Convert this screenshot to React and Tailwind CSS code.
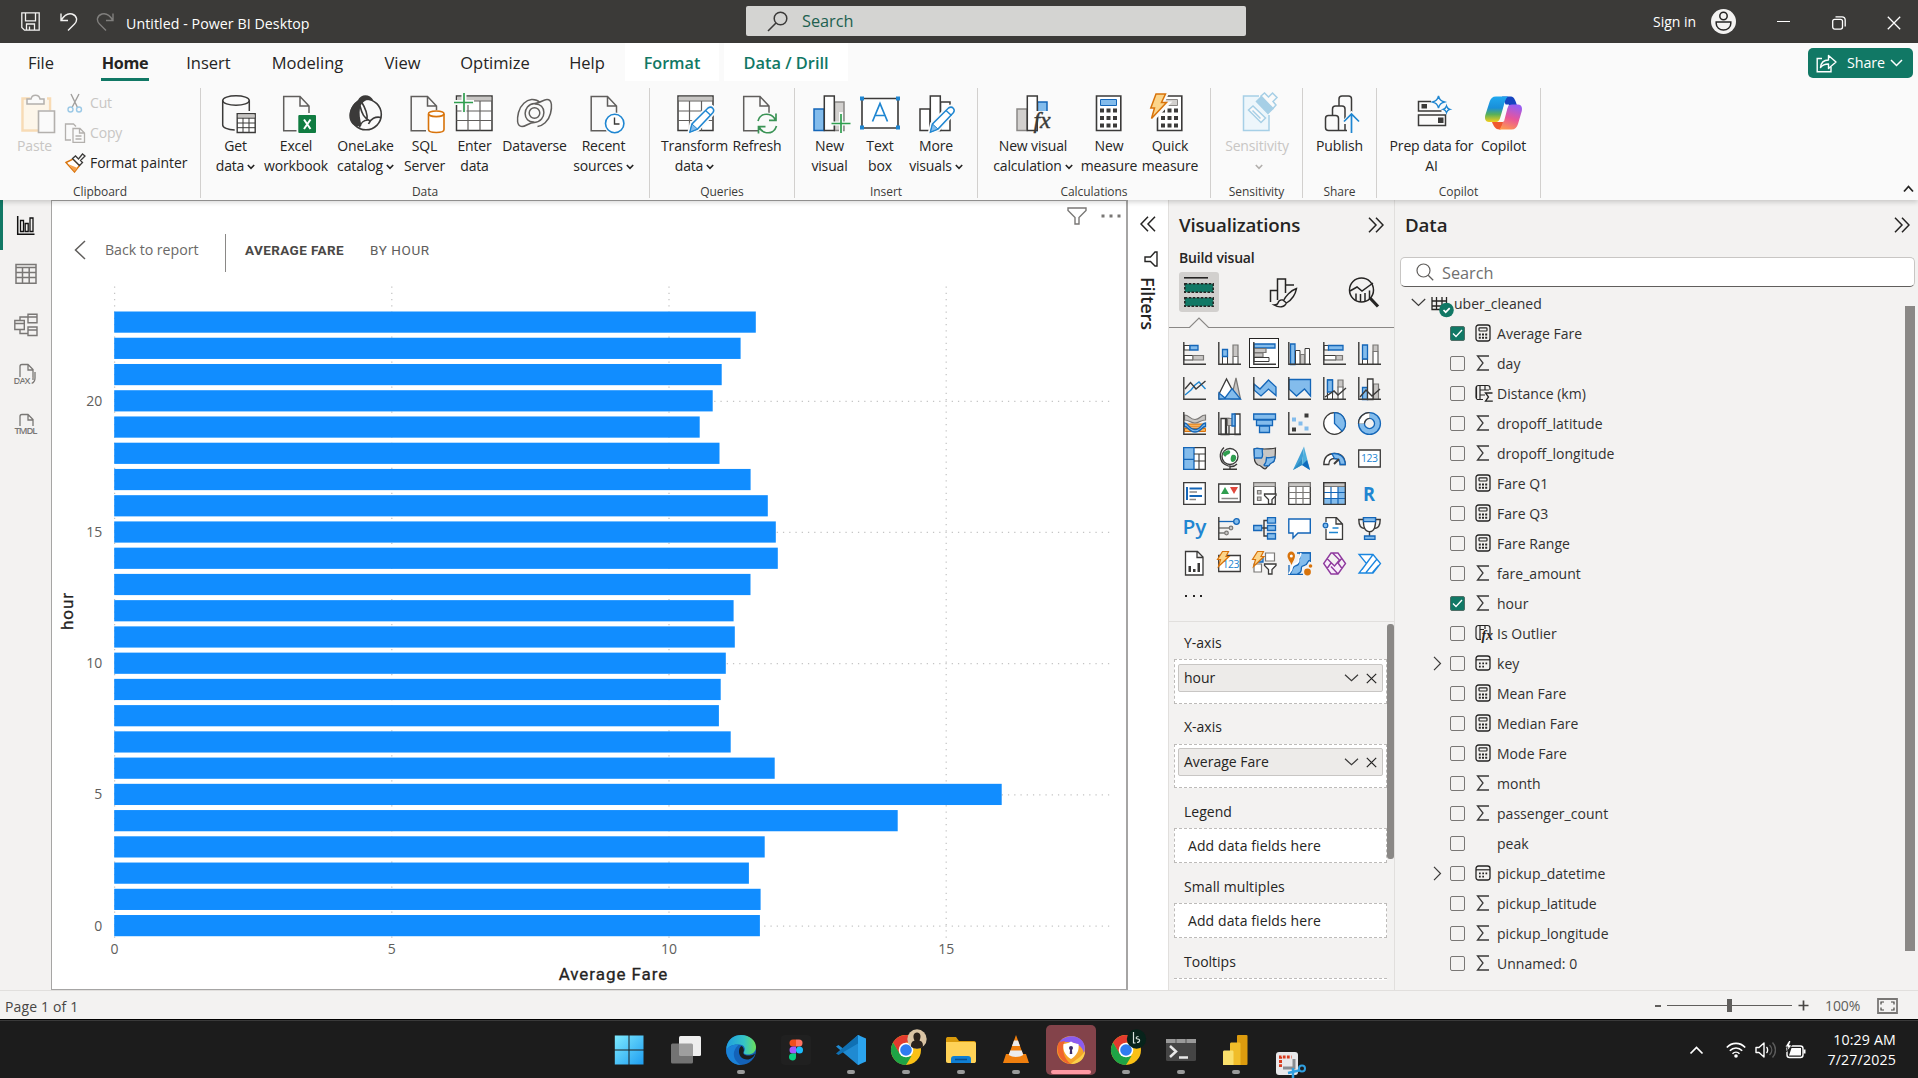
import React from "react";

const INK = "#3b3a39";
const BLUE = "#1f86d1";

function Svg({ w, h, vb, className = "", children }) {
  return (
    <svg
      width={w}
      height={h}
      viewBox={vb || `0 0 ${w} ${h}`}
      fill="none"
      className={"shrink-0 " + className}
    >
      {children}
    </svg>
  );
}

/* ---------- shared glyphs ---------- */

const Chevrons = ({ left }) => (
  <Svg w={16} h={16} className={left ? "rotate-180" : ""}>
    <path d="M1 .7 8 8 1 15.3M8 .7 15 8 8 15.3" stroke="#252423" strokeWidth="1.5" />
  </Svg>
);

const SmallCaret = ({ color = "#252423" }) => (
  <Svg w={8} h={6} className="ml-[3px] inline-block align-middle">
    <path d="M.8 1 4 4.4 7.2 1" stroke={color} strokeWidth="1.6" />
  </Svg>
);

/* ---------- title bar ---------- */

function TitleBar() {
  return (
    <div className="flex h-[43px] bg-[#3b3a38] text-white">
      <div className="flex w-[746px] items-center pl-[21px]">
        <Svg w={19} h={19}>
          <path d="M.8.8h17.4v17.4H3.5L.8 15.5zM4.5.8v8h10v-8M5.5 18v-6h8v6M8.5 14.5V18" stroke="#f3f2f1" strokeWidth="1.3" />
        </Svg>
        <Svg w={18} h={20} className="ml-[20px]">
          <path d="M1 1.5v7h7M1.3 8.2C4 3.5 8 1 12 2c5 1.500 6 6.500 2.500 10L8 18.500" stroke="#f3f2f1" strokeWidth="1.4" />
        </Svg>
        <Svg w={18} h={20} className="ml-[18px] -scale-x-100">
          <path d="M1 1.5v7h7M1.3 8.2C4 3.5 8 1 12 2c5 1.500 6 6.500 2.500 10L8 18.500" stroke="#807f7d" strokeWidth="1.4" />
        </Svg>
        <span className="ml-[12px] mt-[5px] text-[14.200px] tracking-[0.060px]">Untitled - Power BI Desktop</span>
      </div>
      <div className="mt-[6px] flex h-[30px] w-[500px] items-center rounded-[2px] bg-[#d4d4d2] pl-[21px]">
        <Svg w={21} h={21}>
          <circle cx="13.500" cy="7.500" r="6.300" stroke={INK} strokeWidth="1.5" />
          <path d="M9 12 1 20" stroke={INK} strokeWidth="1.6" />
        </Svg>
        <span className="ml-[14px] mt-[1px] text-[16.300px] text-[#20604f]">Search</span>
      </div>
      <div className="flex flex-1 items-center">
        <span className="ml-[407px] w-[46px] whitespace-nowrap text-[14px]">Sign in</span>
        <Svg w={25} h={25} className="ml-[12px]">
          <circle cx="12.500" cy="12.500" r="12.500" fill="#f3f2f1" />
          <circle cx="12.500" cy="7" r="3.700" stroke="#252423" strokeWidth="1.5" />
          <path d="M5.200 13h14.600v1.500c0 4-3.500 6.500-7.300 6.500s-7.300-2.500-7.300-6.500z" stroke="#252423" strokeWidth="1.500" />
        </Svg>
        <div className="ml-[41px] h-[1.500px] w-[13px] bg-white" />
        <Svg w={14} h={14} className="ml-[42px] mt-[3px]">
          <rect x=".7" y="3.300" width="9.800" height="9.800" rx="2" stroke="#fff" strokeWidth="1.300" />
          <path d="M3.500.9h6.500c2 0 3.200 1.300 3.200 3.200v6.500" stroke="#fff" strokeWidth="1.300" />
        </Svg>
        <Svg w={14} h={14} className="ml-[41px] mt-[3px]">
          <path d="m.8.8 12.400 12.400M13.200.8.8 13.200" stroke="#fff" strokeWidth="1.300" />
        </Svg>
      </div>
    </div>
  );
}

/* ---------- tabs ---------- */

const TABS = [
  ["File", "w-[26px] ml-[28px]"],
  ["Insert", "w-[43px] ml-[38px]"],
  ["Modeling", "w-[73px] ml-[41px]"],
  ["View", "w-[37px] ml-[40px]"],
  ["Optimize", "w-[70px] ml-[39px]"],
  ["Help", "w-[36px] ml-[39px]"],
];

function Tab({ tab }) {
  return <div className={"flex justify-center whitespace-nowrap " + tab[1]}>{tab[0]}</div>;
}

function Tabs() {
  return (
    <div className="flex h-[38px] text-[16.500px] leading-[40px] text-[#252423]">
      <Tab tab={TABS[0]} />
      <div className="ml-[47px] flex w-[48px] justify-center border-b-[3px] border-[#117865] text-[16.200px] font-bold tracking-[-0.300px]">
        Home
      </div>
      {TABS.slice(1).map((t) => (
        <Tab key={t[0]} tab={t} />
      ))}
      <div className="ml-[20px] w-[94px] bg-white text-center text-[16.200px] font-semibold text-[#117865]">Format</div>
      <div className="ml-[5px] w-[124px] bg-white text-center text-[16.400px] font-semibold text-[#117865]">Data / Drill</div>
      <div className="ml-auto mr-[5px] mt-[5px] flex h-[30px] w-[105px] items-center rounded-[5px] bg-[#117865] pl-[8px] text-white">
        <Svg w={21} h={20}>
          <path d="M6 5.500H1.200v13.300H15V14" stroke="#fff" strokeWidth="1.400" />
          <path d="M4.500 14.500c.5-5 3.500-7.500 8-7.500V2.500L20 9l-7.500 6.500V11c-3.500 0-6 .8-8 3.500z" stroke="#fff" strokeWidth="1.400" strokeLinejoin="round" />
        </Svg>
        <span className="ml-[10px] text-[14.300px] leading-none tracking-[-0.100px]">Share</span>
        <Svg w={13} h={8} className="ml-[5px]">
          <path d="m1 1 5.500 5.500L12 1" stroke="#fff" strokeWidth="1.500" />
        </Svg>
      </div>
    </div>
  );
}

/* ---------- ribbon icons, 40 x 40 ---------- */

const Doc = ({ x = 6.500, c = "#605e5c" }) => (
  <g transform={`translate(${x} 2)`}>
    <path d="M26 18v-8L17 .5H.7v34.300H16M17 .5V10h9" stroke={c} strokeWidth="1.500" />
  </g>
);

const Bars = ({ a, b, c }) => (
  <>
    <path d="M4 15h10v21.500H4z" fill={a[0]} stroke={a[1]} strokeWidth="1.500" />
    <path d="M24.500 8H34v28.500h-9.500z" fill={c[0]} stroke={c[1]} strokeWidth="1.500" />
    <path d="M14.300 2h10v34.500h-10z" fill={b[0]} stroke={b[1]} strokeWidth="1.500" />
  </>
);

const Pencil = ({ x }) => (
  <g transform={`translate(${x} 12)`}>
    <path d="m1.500 26 2-8L19.500 2c4-2.500 7 1.500 5 4.500L9 23z" fill="#fafafa" stroke="#fafafa" strokeWidth="5" />
    <path d="m1.500 26 2-8L19.500 2c4-2.500 7 1.500 5 4.500L9 23z" fill="#fff" stroke={BLUE} strokeWidth="1.500" />
    <path d="m1.500 26 2-8 5.500 5z" fill="#83bcec" stroke={BLUE} strokeWidth="1" />
    <path d="m17 4.500 5.500 5" stroke={BLUE} strokeWidth="1.400" />
  </g>
);

const CalcBody = ({ screen }) => (
  <>
    <path d="M7.500 2h24.300v34.500H7.500z" fill="#fff" stroke={INK} strokeWidth="1.600" />
    <path d="M11.500 5.500h16v6h-16z" fill={screen[0]} stroke={screen[1]} />
    {[14.500, 22, 29.500].map((y) => (
      <path key={y} d={`M11 ${y}h4v4h-4zM17.500 ${y}h4v4h-4zM24 ${y}h4v4h-4z`} fill={INK} />
    ))}
  </>
);

const ICONS = {
  getData: (
    <>
      <ellipse cx="20" cy="6.500" rx="13.300" ry="4.800" stroke={INK} strokeWidth="1.500" />
      <path d="M6.700 6.500V31c0 2.500 5 4.800 12 5M33.300 6.500V17" stroke={INK} strokeWidth="1.500" />
      <path d="M21.200 19.700h18v18.800h-18z" fill="#fff" stroke={INK} strokeWidth="1.400" />
      <path d="M21.900 20.400h16.600v3.400H21.900z" fill="#c8c6c4" />
      <path d="M21 24.200h18M21 29h18M21 33.700h18M27 24v14M33 24v14" stroke={INK} />
    </>
  ),
  excel: (
    <>
      <Doc x={7} />
      <path d="M20.500 19h20v21h-20z" fill="#fafafa" />
      <rect x="22.300" y="21" width="17.700" height="18" rx="1" fill="#107c41" />
      <path d="m28 25.500 6.500 9.500M34.500 25.500 28 35" stroke="#fff" strokeWidth="2" />
    </>
  ),
  oneLake: (
    <>
      <circle cx="20" cy="20.500" r="15.300" stroke={INK} strokeWidth="1.600" />
      <path d="M12 6C15-.500 24-.500 27.500 6.500 22 4 15.500 7 14 14c-1 6 0 11 1.500 17.500C8 35 2 27 3.500 19c1-5 4-9 8.500-13z" fill={INK} />
      <path d="M15 7c5 8 7 13 6 19M22.500 30c2-5 7-8 12.500-6.500M22 26c-4 0-7.500 3-8.500 7.500M14 12c2 8 4 12 10 15" stroke={INK} strokeWidth="1.600" />
    </>
  ),
  sql: (
    <>
      <Doc x={5.500} />
      <path d="M21 16h20v24H21z" fill="#fafafa" />
      <path d="M23.500 20v15.500c0 4 15.500 4 15.500 0V20" fill="#fff" stroke="#d8730b" strokeWidth="1.600" />
      <ellipse cx="31.250" cy="19.800" rx="7.750" ry="2.800" fill="#fff" stroke="#d8730b" strokeWidth="1.600" />
    </>
  ),
  enterData: (
    <>
      <path d="M1.500 2h35.500v34.500H1.500z" fill="#fff" stroke={INK} strokeWidth="1.500" />
      <path d="M2.200 2.700H36.300v4H2.200z" fill="#c8c6c4" />
      <path d="M1.500 7h35.500M1.500 17h35.500M1.500 26.500h35.500M13 7v29.500M25 7v29.500" stroke="#605e5c" strokeWidth="1.200" />
      <path d="M9-1v20M-1 8.500h20" stroke="#fafafa" strokeWidth="5" />
      <path d="M9-1v19M-1 8.500h19" stroke="#2f9e4f" strokeWidth="1.700" />
    </>
  ),
  dataverse: (
    <g stroke="#605e5c" strokeWidth="1.500">
      <circle cx="19.500" cy="19" r="5.300" />
      <path d="M19.500 28c-12.500 1-12.500-17.500 0-18.500C25 9.500 28 5.500 32 5.500c5.500 0 5 8 3.500 14-2 8-8 12.500-13 13" />
      <path d="M19.500 10c12.500-1 12.500 17.500 0 18.500-5.500 0-8.500 4-12.500 4-5.500 0-5-8-3.500-14 2-8 8-12.500 13-13 4-.3 7 1.500 8.500 3" />
    </g>
  ),
  recent: (
    <>
      <Doc x={6.500} />
      <circle cx="30.700" cy="29.500" r="11" fill="#fafafa" />
      <circle cx="30.700" cy="29.500" r="9.200" fill="#fff" stroke={BLUE} strokeWidth="1.600" />
      <path d="M30.500 23.500v6.500h5" stroke={INK} strokeWidth="1.400" />
    </>
  ),
  transform: (
    <>
      <path d="M3 2h35v34.500H3z" fill="#fff" stroke={INK} strokeWidth="1.500" />
      <path d="M3.700 2.700h33.600v3.800H3.700z" fill="#c8c6c4" />
      <path d="M3 7h35M3 17h35M3 26.500h35M14.500 7v29.500M26.500 7v29.500" stroke="#605e5c" strokeWidth="1.200" />
      <Pencil x={13.500} />
    </>
  ),
  refresh: (
    <>
      <Doc x={6} />
      <circle cx="30" cy="29.500" r="11" fill="#fafafa" />
      <path d="M21 27c1.500-5.500 6-7.500 11-6.500 3 .7 5 2.500 6.500 5.500M39 19.500v6.800h-7M39.500 32c-1.500 5.500-6 7.500-11 6.500-3-.7-5-2.500-6.500-5.500M21.500 39.500v-6.800h7" stroke="#3a9355" strokeWidth="1.700" />
    </>
  ),
  newVisual: (
    <>
      <Bars a={["#83bcec", "#1466b8"]} b={["#fff", INK]} c={["#d2d0ce", "#8a8886"]} />
      <path d="M31 18v22M20 29.500h21" stroke="#fafafa" strokeWidth="4" />
      <path d="M31 20v19M21.500 29.500h19" stroke="#2f9e4f" strokeWidth="1.700" />
    </>
  ),
  textBox: (
    <>
      <path d="M2 4.500h36v29.500H2z" fill="#fff" stroke={INK} strokeWidth="1.600" />
      <path d="M0 2.500h4v4H0zM36 2.500h4v4h-4zM0 31.500h4v4H0zM36 31.500h4v4h-4z" fill={BLUE} />
      <path d="m12.500 27.500 7.500-18 7.500 18M15 21.500h10" stroke={BLUE} strokeWidth="1.700" />
    </>
  ),
  moreVisuals: (
    <>
      <Bars a={["#fff", INK]} b={["#fff", INK]} c={["#fff", INK]} />
      <Pencil x={13} />
    </>
  ),
  newCalc: (
    <>
      <Bars a={["#d2d0ce", "#8a8886"]} b={["#fff", INK]} c={["#83bcec", "#1466b8"]} />
      <path d="M19 17h22v23H25V22h-1z" fill="#fafafa" />
      <text x="20.500" y="34" fontFamily="Liberation Serif, serif" fontStyle="italic" fontSize="24" fill={INK} stroke={INK} strokeWidth=".4">fx</text>
    </>
  ),
  newMeasure: <CalcBody screen={["#83bcec", "#1466b8"]} />,
  quickMeasure: (
    <>
      <CalcBody screen={["#d2d0ce", "#8a8886"]} />
      <path d="M6 0h11l-4 9h6L2 27l3-12H0z" fill="#fafafa" stroke="#fafafa" strokeWidth="3" />
      <path d="M6 0h9.500l-4 8.500h5L1.500 24.500l3-10.500H.8z" fill="#fcd58a" stroke="#d8730b" strokeWidth="1.500" />
    </>
  ),
  sensitivity: (
    <g stroke="#a6cfe6" strokeWidth="1.500">
      <path d="M22 2H6.500v34.500H32V21" fill="#edf6fb" />
      <path d="m11.500 16 4.500-4 12.500 12-4.500 4.500zM15.500 16.500l8 8" fill="#fafafa" />
      <path d="m19.500 7.500 4.500-4.500L36 14.500l-5 5z" fill="#a6cfe6" />
      <path d="m24 2 3.500-3 4 4 4-4 4.500 4.500-4 4 3 3.500-3 3.500z" fill="#fafafa" />
    </g>
  ),
  publish: (
    <>
      <g stroke={INK} strokeWidth="1.500">
        <path d="M19 12V5c0-2 1-3 3-3h6.500c2 0 3 1 3 3v13" />
        <path d="M12.500 21v-6c0-2 1-3 3-3H22c2 0 3 1 3 3v10M25 30v6.500" />
        <path d="M8.500 21.500h7c2 0 3 1 3 3v12H8.500c-2 0-3-1-3-3v-9c0-2 1-3 3-3zM18 36.500h9" />
      </g>
      <path d="M24 28 31.500 19.500 39 28M31.500 20v19" stroke="#fafafa" strokeWidth="3.500" />
      <path d="M24 27.500 31.500 20l7.500 7.500M31.500 20v19" stroke={BLUE} strokeWidth="1.700" />
    </>
  ),
  prep: (
    <>
      <path d="M19 7.500H6.500v9.500h23M6.500 21h27v10.500h-27z" stroke={INK} strokeWidth="1.500" />
      <path d="M9.500 10h5.500v4.500H9.500zM26 23.500h5.500V29H26z" fill={INK} />
      <path d="M26.500 2c1 4 2.500 5 6 6-3.500 1-5 2-6 6-1-4-2.500-5-6-6 3.500-1 5-2 6-6zM34.500 12c.6 2 1.500 2.800 3.300 3.300-1.800.5-2.700 1.300-3.300 3.300-.6-2-1.500-2.800-3.300-3.300 1.800-.5 2.700-1.300 3.300-3.300z" stroke={BLUE} strokeWidth="1.400" fill="#fafafa" />
    </>
  ),
  copilot: (
    <>
      <defs>
        <linearGradient id="cpA" x1="0" y1="0" x2="0" y2="1">
          <stop offset="0" stopColor="#1fa8f0" />
          <stop offset=".45" stopColor="#1a8fd8" />
          <stop offset=".7" stopColor="#57b05a" />
          <stop offset="1" stopColor="#f5cf1b" />
        </linearGradient>
        <linearGradient id="cpB" x1="0.500" y1="0" x2=".2" y2="1">
          <stop offset="0" stopColor="#9a5df0" />
          <stop offset=".5" stopColor="#e8559a" />
          <stop offset="1" stopColor="#ff9a4d" />
        </linearGradient>
      </defs>
      <path d="M18 2.500h9c3 0 4.500 4 6 9H22z" fill="#1544c0" />
      <path d="M8 28h12l-3.500 7.500h-1c-4 0-6-3.500-7.500-7.500z" fill="#f0592f" />
      <path d="M12 2.500h12c-2.500 2-3.500 6-4.500 10l-3.500 12c-1 3-3 3.500-5 3.500H5c-3.500 0-4.500-3-3.800-6.500L5.500 8c1-3.500 3-5.500 6.500-5.500z" fill="url(#cpA)" />
      <path d="M27.500 35.500H15c2.500-2 3.500-6 4.500-10L23 14c1-3 3-3.500 5-3.500h6c3.500 0 4.500 3 3.800 6.500L34 30c-1 3.500-3 5.500-6.500 5.500z" fill="url(#cpB)" />
      <path d="m20 12.500-3 11.500-1.500 3.500h4.500l3.500-13.500 1.500-3.500h-4.300z" fill="#fafafa" />
    </>
  ),
};

function RibbonItem({ icon, l1, l2, caret, width, disabled }) {
  return (
    <div className={"flex flex-col items-center whitespace-nowrap " + width + (disabled ? " text-[#c8c6c4]" : "")}>
      <Svg w={40} h={40} className="overflow-visible">{ICONS[icon]}</Svg>
      <div className="mt-[2px] h-[20px]">{l1}</div>
      <div className="h-[20px]">
        {l2}
        {caret && <SmallCaret color={disabled ? "#b3b0ad" : "#252423"} />}
      </div>
    </div>
  );
}

const GROUPS = [
  {
    name: "Data", width: "w-[449px]", pad: "pl-[8px]",
    items: [
      { icon: "getData", l1: "Get", l2: "data", caret: true, width: "w-[53px]" },
      { icon: "excel", l1: "Excel", l2: "workbook", width: "w-[68px]" },
      { icon: "oneLake", l1: "OneLake", l2: "catalog", caret: true, width: "w-[71px]" },
      { icon: "sql", l1: "SQL", l2: "Server", width: "w-[47px]" },
      { icon: "enterData", l1: "Enter", l2: "data", width: "w-[53px]" },
      { icon: "dataverse", l1: "Dataverse", width: "w-[67px]" },
      { icon: "recent", l1: "Recent", l2: "sources", caret: true, width: "w-[71px]" },
    ],
  },
  {
    name: "Queries", width: "w-[145px]", pad: "pl-[10px]",
    items: [
      { icon: "transform", l1: "Transform", l2: "data", caret: true, width: "w-[69px]" },
      { icon: "refresh", l1: "Refresh", width: "w-[56px]" },
    ],
  },
  {
    name: "Insert", width: "w-[183px]", pad: "pl-[10px]",
    items: [
      { icon: "newVisual", l1: "New", l2: "visual", width: "w-[49px]" },
      { icon: "textBox", l1: "Text", l2: "box", width: "w-[52px]" },
      { icon: "moreVisuals", l1: "More", l2: "visuals", caret: true, width: "w-[60px]" },
    ],
  },
  {
    name: "Calculations", width: "w-[233px]", pad: "pl-[10px]",
    items: [
      { icon: "newCalc", l1: "New visual", l2: "calculation", caret: true, width: "w-[90px]" },
      { icon: "newMeasure", l1: "New", l2: "measure", width: "w-[62px]" },
      { icon: "quickMeasure", l1: "Quick", l2: "measure", width: "w-[60px]" },
    ],
  },
  {
    name: "Sensitivity", width: "w-[92px]", pad: "pl-[13px]",
    items: [{ icon: "sensitivity", l1: "Sensitivity", caret: true, disabled: true, width: "w-[66px]" }],
  },
  {
    name: "Share", width: "w-[74px]", pad: "pl-[10px]",
    items: [{ icon: "publish", l1: "Publish", width: "w-[53px]" }],
  },
  {
    name: "Copilot", width: "w-[164px]", pad: "pl-[8px]",
    items: [
      { icon: "prep", l1: "Prep data for", l2: "AI", width: "w-[93px]" },
      { icon: "copilot", l1: "Copilot", width: "w-[51px]" },
    ],
  },
];

const GroupName = ({ children }) => (
  <div className="mt-auto h-[15px] text-center text-[12px] leading-[18px] tracking-[-0.050px] text-[#3b3a39]">{children}</div>
);

function Ribbon() {
  return (
    <div className="flex h-[119px] pt-[7px] text-[14px] leading-[20px] tracking-[-0.150px] text-[#252423]">
      <div className="flex h-[110px] w-[201px] flex-col border-r border-[#d2d0ce] pt-[6px]">
        <div className="flex">
          <div className="flex w-[52px] flex-col items-end text-[#c8c6c4]">
            <Svg w={35} h={40} className="mr-[-4px]">
              <path d="M9 4.500H1.500v32H17M26 4.500h3v12" stroke="#f8dbb5" strokeWidth="2.500" />
              <path d="M3 6h24v10H17v19H3z" fill="#fdf6ea" />
              <path d="M6 10V5h4c1-5 8-5 9 0h4v5z" fill="#fafafa" stroke="#b3b0ad" strokeWidth="1.500" />
              <path d="M17.500 17h16v21.500h-16z" fill="#fafafa" stroke="#b3b0ad" strokeWidth="1.600" />
            </Svg>
            <div className="mt-[2px]">Paste</div>
          </div>
          <div className="ml-[12px] mt-[-1px] flex flex-col">
            <div className="flex h-[20px] items-center text-[#c8c6c4]">
              <Svg w={22} h={20}>
                <path d="M7 1 13.500 14.500M15 1 8 14.500" stroke="#a19f9d" strokeWidth="1.400" />
                <circle cx="6.500" cy="16.500" r="2.500" stroke="#9cc9e6" strokeWidth="1.400" />
                <circle cx="15" cy="16.500" r="2.500" stroke="#9cc9e6" strokeWidth="1.400" />
              </Svg>
              <span className="ml-[4px]">Cut</span>
            </div>
            <div className="mt-[10px] flex h-[20px] items-center text-[#c8c6c4]">
              <Svg w={22} h={20}>
                <path d="M7 17H1.500V1h8L12 3.500M9 5.500h7l4.500 4.500v9.300H9zM15.500 5.500V10h5M11.500 13h6M11.500 16h6" stroke="#b3b0ad" strokeWidth="1.300" />
              </Svg>
              <span className="ml-[4px]">Copy</span>
            </div>
            <div className="mt-[10px] flex h-[20px] items-center">
              <Svg w={22} h={20}>
                <path d="m2 9.500 7-3.500 6.500 6.500-5 6.500z" fill="#fff" stroke="#d8730b" strokeWidth="1.400" />
                <path d="m4 11 9.500 4-3 3.500z" fill="#f5a04b" />
                <path d="m8.500 5.500 3-2.500 3 3 4-5 2.500 2-4.500 4.500 2 2-3 3z" fill="#fff" stroke={INK} strokeWidth="1.300" />
              </Svg>
              <span className="ml-[4px] whitespace-nowrap tracking-[-0.020px]">Format painter</span>
            </div>
          </div>
        </div>
        <GroupName>Clipboard</GroupName>
      </div>
      {GROUPS.map((g) => (
        <div key={g.name} className={"flex h-[110px] flex-col border-r border-[#d2d0ce] pt-[6px] " + g.width}>
          <div className={"flex " + g.pad}>
            {g.items.map((it) => (
              <RibbonItem key={it.icon} {...it} />
            ))}
          </div>
          <GroupName>{g.name}</GroupName>
        </div>
      ))}
      <Svg w={11} h={8} className="ml-auto mr-[4px] mt-[97px]">
        <path d="m1 6.500 4.500-5 4.500 5" stroke="#252423" strokeWidth="1.800" />
      </Svg>
    </div>
  );
}

/* ---------- left rail ---------- */

function Rail() {
  const g = "#797775";
  return (
    <div className="relative flex w-[51px] flex-col items-center pt-[13px]">
      <div className="absolute left-0 top-0 h-[50px] w-[3px] bg-[#117865]" />
      <Svg w={24} h={24}>
        <path d="M3.700 3v18.200H20.500" stroke="#111" strokeWidth="1.500" />
        <path d="M6.500 7.500h3v11h-3zM11.200 10.500h3v8h-3zM16 5h3v13.500h-3z" stroke="#111" strokeWidth="1.300" />
      </Svg>
      <Svg w={24} h={24} className="mt-[25px]">
        <path d="M2 2.500h20v18.800H2zM2 5.500h20M2 10.500h20M2 15.500h20M8.500 5.500v16M15.200 5.500v16" stroke={g} strokeWidth="1.500" />
      </Svg>
      <Svg w={24} h={26} className="mt-[26px]">
        <path d="M.8 8.500h9.500v9H.8zM.8 11.500h9.500M14 2.300h9v8.500h-9zM14 5h9M14 15h9v8.500h-9zM14 18h9M6 8.500V5h8M6 17.500v4h8" stroke={g} strokeWidth="1.400" />
      </Svg>
      <Svg w={24} h={24} className="mt-[25px] overflow-visible">
        <path d="M6 14V3.500C6 2.300 6.500 1.500 8 1.500h6l5 5v10.500M14 1.500V7h5M21 9v6c0 3-1 4.500-3.500 5.500" stroke={g} strokeWidth="1.300" />
        <text x="-.500" y="21" fontSize="9.500" fontWeight="600" fill={g} stroke="#f3f2f1" strokeWidth="2" paintOrder="stroke" textLength="17">DAX</text>
      </Svg>
      <Svg w={24} h={24} className="mt-[26px] overflow-visible">
        <path d="M6 13V3.500C6 2.300 6.500 1.500 8 1.500h6l5 5v6.500M14 1.500V7h5" stroke={g} strokeWidth="1.300" />
        <text x="0.500" y="21" fontSize="9.500" fontWeight="600" fill={g} textLength="23">TMDL</text>
      </Svg>
    </div>
  );
}

/* ---------- chart ---------- */

const BAR_ENDS = [
  756, 740.8, 721.9, 712.9, 699.9, 719.7, 750.8, 768, 776, 778, 750.7, 733.8,
  735, 726, 720.9, 719.1, 730.9, 774.9, 1001.9, 897.9, 764.9, 749.1, 760.8, 760.1,
];

function Chart() {
  const x0 = 62.2;
  return (
    <Svg w={1074} h={706} className="block text-[14px]">
      <g stroke="#c4c4c4" strokeWidth="1.250" strokeDasharray="1.250 5">
        {[0, 1, 2, 3].map((i) => (
          <path key={i} d={`M${x0 + 0.400 + i * 277.200} 3.500V656`} />
        ))}
        {[118.800, 249.900, 381.100, 512.300, 643.500].map((y) => (
          <path key={y} d={`M${x0} ${y - 0.500}H1058`} />
        ))}
      </g>
      {BAR_ENDS.map((e, i) => (
        <rect key={i} x={x0} y={28.500 + i * 26.240} width={e - 52.200 - x0} height="21.200" fill="#118dff" />
      ))}
      <g fill="#605e5c" textAnchor="end">
        {[20, 15, 10, 5, 0].map((v, i) => (
          <text key={v} x="50.300" y={122.800 + i * 131.200}>{v}</text>
        ))}
      </g>
      <g fill="#605e5c" textAnchor="middle">
        {[0, 5, 10, 15].map((v, i) => (
          <text key={v} x={x0 + 0.400 + i * 277.200} y="671.200">{v}</text>
        ))}
      </g>
      <g fill="#252423" stroke="#252423" strokeWidth=".3" textAnchor="middle" fontFamily="Roboto, sans-serif" fontSize="17" letterSpacing=".95">
        <text x="561.500" y="696.500">Average Fare</text>
        <text transform="translate(21 328) rotate(-90)">hour</text>
      </g>
    </Svg>
  );
}

function Canvas() {
  return (
    <div className="relative w-[1077px] border-2 border-l border-t border-[#a6a5a4] border-b-[1.500px] bg-white">
      <div className="flex h-[82px] items-center pl-[22px] pt-[16px]">
        <Svg w={12} h={20}>
          <path d="m11 1-9.500 9 9.500 9" stroke="#605e5c" strokeWidth="1.500" />
        </Svg>
        <span className="ml-[19px] w-[93px] whitespace-nowrap text-[14.200px] tracking-[-0.050px] text-[#6b6967]">Back to report</span>
        <div className="ml-[27px] mt-[6px] h-[38px] w-px bg-[#8a8886]" />
        <span className="ml-[19px] w-[98px] whitespace-nowrap font-[Roboto,sans-serif] text-[13.500px] font-bold tracking-[0.400px] text-[#4a4846]">AVERAGE FARE</span>
        <span className="ml-[27px] whitespace-nowrap font-[Roboto,sans-serif] text-[13.500px] tracking-[0.600px] text-[#605e5c]">BY HOUR</span>
      </div>
      <Chart />
      <div className="absolute right-[5px] top-[5px] flex items-center">
        <Svg w={20} h={20}>
          <path d="M1 2h18v2.500l-7 7V18H8v-6.500l-7-7z" stroke="#797775" strokeWidth="1.400" />
        </Svg>
        <Svg w={20} h={4} className="ml-[14px]">
          <path d="M.5.500h3v3h-3zM8.500.500h3v3h-3zM16.500.500h3v3h-3z" fill="#797775" />
        </Svg>
      </div>
    </div>
  );
}

function FiltersPane() {
  return (
    <div className="flex w-[40px] flex-col items-center bg-white pr-[1px] pt-[16px]">
      <Chevrons left />
      <Svg w={14} h={16} className="ml-[6px] mt-[19px]">
        <path d="M13 1v14h-2L6.500 10.500H1v-4.500h5.500L11 1z" stroke="#252423" strokeWidth="1.400" />
      </Svg>
      <div className="mt-[10px] text-[18.200px] font-semibold leading-[22px] tracking-[-0.200px] text-[#252423] [writing-mode:vertical-rl]">Filters</div>
    </div>
  );
}

/* ---------- visualization gallery icons, 23 x 23 ---------- */

const B = { fill: "#83bcec", stroke: "#1466b8", strokeWidth: 1.300 };
const G = { fill: "#c8c6c4", stroke: "#797775", strokeWidth: 1.200 };
const W = { fill: "#fff", stroke: INK, strokeWidth: 1.300 };
const L = { stroke: INK, strokeWidth: 1.400 };
const Axis = () => <path d="M.8 0v22.300H23" {...L} />;
const Bolt = () => <path d="M4.500-.5h6l-2.500 5h3L.5 14.500 2.500 7.500h-3z" fill="#fcd58a" stroke="#d8730b" strokeWidth="1.200" />;
const Num = ({ x, y }) => (
  <text x={x} y={y} fontSize="10.500" fill={BLUE} textLength="17" fontFamily="Open Sans, sans-serif">123</text>
);
const MiniFunnel = () => <path d="M11.500 12h11.500v1.500l-4 4V22h-3.500v-4.500l-4-4z" {...W} />;

const VIZ = [
  <><path d="M1 3.500h6v4.500H1zM1 13.500h9v4.500H1z" {...W} strokeWidth="1" /><path d="M7 3.500h8v4.500H7z" {...B} /><path d="M10 13.500h10.500v4.500H10z" {...G} /><Axis /></>,
  <><path d="M4.500 14.500h5v8h-5zM15 14.500h5v8h-5z" {...W} strokeWidth="1" /><path d="M4.500 7.500h5v7h-5z" {...B} /><path d="M15 3h5v11.500h-5z" {...G} /><Axis /></>,
  <><path d="M1 2h21v4H1z" {...B} /><path d="M1 6.500h12v4H1zM1 11h9v4H1z" {...G} /><path d="M1 15.500h15v4H1z" {...W} strokeWidth="1" /><Axis /></>,
  <><path d="M2.500 2h4.500v20.500H2.500z" {...B} /><path d="M7.500 8.500H12v14H7.500zM17 6.500h4.500v16H17z" {...W} strokeWidth="1" /><path d="M12.500 12.500h4v10h-4z" {...G} /><Axis /></>,
  <><path d="M1 3.500h5v4.500H1zM1 13.500h12v4.500H1z" {...W} strokeWidth="1" /><path d="M5.500 3.500H20v4.500H5.500z" {...B} /><path d="M13 13.500h6.500v4.500H13z" {...G} /><Axis /></>,
  <><path d="M4.500 17h5v5.500h-5zM15 9.500h5v13h-5z" {...W} strokeWidth="1" /><path d="M4.500 3h5v14h-5z" {...B} /><path d="M15 3h5v6.500h-5z" {...G} /><Axis /></>,
  <><path d="m2 18 6-5 4-5 4-3 6.500 7" stroke={BLUE} strokeWidth="1.400" /><path d="m2 12 5.500-6.500L13 12l9.500-8" {...L} /><Axis /></>,
  <><path d="m18 1 4.500 21H13z" {...G} /><path d="M1 17 8.500 2 18 20 1 22z" {...W} /><path d="m1 16 6 5 7-9.500L22.500 22H1z" {...B} /></>,
  <><path d="m1 7 6 5 8.500-9L23 10v8.500L15.500 12 8 19 1 13z" {...B} /><Axis /></>,
  <><path d="M1 2.500h21.500V19l-6-7-8 7L1 12z" {...B} /><Axis /></>,
  <><path d="M4.500 3h5v14h-5z" {...B} /><path d="M4.500 13h5v9.500h-5zM15 9.500h5v13h-5z" {...W} strokeWidth="1" /><path d="M4.500 3h5v12h-5z" {...B} /><path d="M15 3h5v7h-5z" {...G} /><path d="m2 20 9-6 4 4 8-7" {...L} /><Axis /></>,
  <><path d="M4.500 10.500h5v12h-5z" {...B} /><path d="M15.500 7h5v15.500h-5z" {...G} /><path d="M9.500 2h5.500v20.500H9.500z" {...W} /><path d="m2 20 6-7 6 6 8-7" {...L} /><Axis /></>,
  <><path d="M1.500 12h21v3h-21zM1.500 16.500h21v3h-21z" fill="#f9b15a" stroke="#d8730b" /><path d="M1.500 3c5 0 5 4.500 10.500 4.500S17 3 22.500 3v5c-5 0-6 3-10.500 3S6 8 1.500 8z" {...G} /><path d="M1.500 11c4 0 4 6.500 10.500 6.500S18 11 22.500 11v3.500c-4 0-4 5.500-10.500 5.500S5.500 14.500 1.500 14.500z" {...B} /><Axis /></>,
  <><path d="M3 6.500h4.500v16H3zM8.500 6.500H11v16H8.500zM17 2h5v20.500h-5z" {...W} /><path d="M9.500 6.500h5v7h-5z" {...G} /><path d="M14 2h3v12h-3z" {...B} /><Axis /></>,
  <><path d="M.7 2h21.800v5.500H.7z" {...B} /><path d="M3.500 8h16v5.500h-16zM6.500 14h10v6.500h-10z" {...B} /></>,
  <><path d="M16.500 1.500h4v4h-4zM4 15.500h4v4H4z" fill={INK} /><path d="M4 5.500h4v4H4zM10.500 9.500h4v4h-4zM16.500 14.500h4v4h-4z" fill="#83bcec" /><Axis /></>,
  <><circle cx="11.500" cy="11.500" r="10.800" {...W} /><path d="M11.500.7a10.800 10.800 0 0 1 7.600 18.500l-7.600-7.700z" {...B} /></>,
  <><circle cx="11.500" cy="11.500" r="8" stroke="#1466b8" strokeWidth="7.200" /><circle cx="11.500" cy="11.500" r="8" stroke="#83bcec" strokeWidth="4.600" /><path d="M3.500 11.500a8 8 0 0 1 8-8" stroke={INK} strokeWidth="7.200" /><path d="M3.500 11.500a8 8 0 0 1 8-8" stroke="#fff" strokeWidth="4.600" /></>,
  <><path d="M.7.7h21.600v21.600H.7z" {...W} /><path d="M.7.7H11v11.600H.7zM.7 12.300H11v10H.7z" {...B} /><path d="M11 7h11.500M16 7v15.500M16 14h6.500M11 14h5" {...L} strokeWidth="1.100" /></>,
  <><circle cx="12" cy="9.500" r="8" {...W} /><path d="M8 4c3-2 5 0 4 2s-3 1-4 3-3-1-3-2 1-2 3-3zM14 8c3-1 5 1 4 4s-4 4-5 2 0-5 1-6z" fill="#2f9e4f" /><path d="M6 .5C1 5 1 14 7 17.500s10 1.500 12-.5M12 18.500v3.500M5 22.300h14" {...L} /></>,
  <><path d="M1 2c3-1.500 6 0 10 0s8 0 11.500-1c-.500 5 .5 9-1.500 13-2 2-4 1.500-5 4.500-2 0-2 3-4 3.500-3-1-4-4-7-4-3-2-4-4-3.500-8C1 7 1.500 5 1 2z" {...G} stroke={INK} /><path d="M1 2c3-1.500 5 0 8.500 0-1 4 1.500 6-1 9H1.500C1 7 1.500 5 1 2zM13.500 10.500c3 1 6-1 8.500-.5-.5 4-1 5-3.500 6-1.500.5-2.500 2-3 3-2-1-4 1-4.500-1 2-2 2.500-4 2.500-7.500z" {...B} /></>,
  <><path d="M16-.5 5 23l9-5z" fill="#3fa0d6" /><path d="M16-.5 22 23l-8-5z" fill="#4fb0dd" /><path d="m14 18 8 5-3-10z" fill="#0f6cbd" /><path d="m14 18-9 5 9-11z" fill="#2b8cc4" /></>,
  <><path d="M.8 17.500C1 10 5.500 6.500 11.500 6.500S22 10 22.200 17.500h-5c0-4-2-6-5.700-6s-5.700 2-5.700 6z" {...W} /><path d="M9 6.700C16 5.500 22 10 22.200 17.500h-5c0-4-2-6-5.700-6z" {...B} /><path d="m11 17 5-5" stroke={INK} strokeWidth="2" /></>,
  <><path d="M.7 3h21.600v17H.7z" {...W} /><Num x={3} y={15} /></>,
  <><path d="M.7.7h21.600v21.600H.7z" {...W} /><path d="M4 5v13M6.500 6.500H19M6.500 14H19" stroke="#1466b8" strokeWidth="2" /><path d="M6.500 10H14M6.500 17.500H13" stroke="#8a8886" strokeWidth="1.300" /></>,
  <><path d="M.7 2h21.600v18H.7z" {...W} /><path d="m3 12 4-7 4 7z" fill="#2f9e4f" /><path d="m12 5h8l-4 7z" fill="#e0473c" /><path d="M3.500 16.500H20" stroke="#8a8886" strokeWidth="1.500" /></>,
  <><path d="M.7.7h21.600v21.600H.7z" {...W} /><path d="M.7.7h21.600v3.800H.7z" {...G} /><path d="M4.500 8.500h3.500V12H4.500zM4.500 15h3.500v3.500H4.500z" {...G} /><MiniFunnel /></>,
  <><path d="M.7.7h21.600v21.600H.7z" {...W} /><path d="M.7.7h21.600v3.800H.7z" {...G} /><path d="M.7 10.500h21.600M.7 16.500h21.600M8 5v17.500M15 5v17.500" stroke="#797775" strokeWidth="1.200" /></>,
  <><path d="M.7.7h21.600v21.600H.7z" {...W} /><path d="M15 5h7v17.300H.7V16.500H15z" fill="#83bcec" /><path d="M.7.7h21.600v3.800H.7z" {...G} /><path d="M.7 10.500h21.600M.7 16.500h21.600M8 5v17.500M15 5v17.500" stroke="#1466b8" strokeWidth="1.200" /><path d="M.7.7h21.600v21.600H.7z" stroke={INK} strokeWidth="1.300" /></>,
  <text x="5" y="19" fontSize="20" fontWeight="700" fill={BLUE} textLength="12" lengthAdjust="spacingAndGlyphs">R</text>,
  <text x="-.5" y="17" fontSize="20" fontWeight="600" fill={BLUE} textLength="24" lengthAdjust="spacingAndGlyphs">Py</text>,
  <><path d="M1 4.500h17M1 11h12M1 16h7" {...L} strokeWidth="1.200" /><path d="M1 4.500h17" stroke="#1466b8" strokeWidth="1.300" /><circle cx="18.500" cy="4.500" r="2.800" {...B} /><circle cx="13" cy="11" r="1.800" {...G} /><circle cx="8.500" cy="16" r="1.800" {...G} /><Axis /></>,
  <><path d="M8 11h6M14 3.500h-3v15.500h3M11 11h5" {...L} /><path d="M.7 8.500h8v5h-8zM14.500.7h8v5.500h-8zM14.500 8.500h8v5h-8zM14.500 16.500h8V22h-8z" {...B} /></>,
  <path d="M.8 2h21.500v14H10l-5 5v-5H.8z" fill="#fff" stroke="#1466b8" strokeWidth="1.400" />,
  <><path d="M3 5V.7h10.500L19.500 7v15.300H3V12M13 .7V7h6.500" {...W} /><circle cx="2.500" cy="8.500" r="2.300" {...B} /><path d="M9.500 11h6M6 15.500h9" stroke={BLUE} strokeWidth="1.300" /></>,
  <><path d="M6 2.500H.8c0 5 2 9 6 9M17 2.500h5.200c0 5-2 9-6 9M11.500 15v4" {...L} /><path d="M5.500.7h12c.5 8-1 14-6 14S5 9 5.500.7z" {...W} /><path d="M5.500.7h12v4h-12zM6.500 19h10.500v3.300H6.500z" {...B} /></>,
  <><path d="M2.500-.5h12L20 5v18H2.500zM14 0v5.500h6" {...W} /><path d="M5.500 14h2.500v6H5.500zM10 17h2.500v3H10zM14.500 11H17v9h-2.500z" fill={INK} /></>,
  <><path d="M.7 3.500h21.600v16H.7z" {...W} /><Num x={4.500} y={15.500} /><Bolt /></>,
  <><path d="M1 12h7.500v8H1zM12.500 1h9v8h-9z" {...G} fill="#fff" /><path d="M3 5h7v5H3z" {...B} /><MiniFunnel /><Bolt /></>,
  <><path d="M9 1h13.300v9M1 13v9.300h14" stroke="#1466b8" strokeWidth="1.300" /><path d="M12 1h10.300v7c-3 0-2 4-5 5s-4 1-4 4-1 3.500-4 5.300H1.500C5 19 4 15 7 14s4-1 4-5 3-4 1-8z" {...B} /><path d="M13 1c-1 3-1 4-2 5s1 4-2 5-5 2-5 5-2 3-3 6" stroke="#fff" strokeWidth="1.500" /><path d="M-.5 4C-.5-2 7-2 7 4c0 3-2 5-3.500 9C2 9-.5 7-.5 4z" fill="#d8730b" /><circle cx="3.300" cy="4" r="1.500" fill="#fff" /><circle cx="19.500" cy="20" r="3.400" fill="#d8730b" /><circle cx="22.500" cy="14" r="1.800" fill="#d8730b" /></>,
  <path d="M8 1h7l7.500 10.500L15 22H8L.7 11.500zM4 6.500l7.500 7.500 5-6-7-7M15 22l-7-7.500M19 6l-4 5 4 5.500M4 16.500 8 11" fill="#f9eefb" stroke="#8f3a9e" strokeWidth="1.400" />,
  <path d="M1 2.500h14l7.500 9-7.500 9.500H1l7.500-9.500zM8 20.500 19 7M4 17.500 15 2.500M14.500 20.500l6-7" fill="#fff" stroke="#1a86e0" strokeWidth="1.300" />,
];

function FieldChip({ label }) {
  return (
    <div className="flex h-[28px] items-center rounded-[2px] border border-[#c8c6c4] bg-[#edebe9] pl-[5px] pr-[5px]">
      <span className="flex-1">{label}</span>
      <Svg w={15} h={8}>
        <path d="m1 .8 6.500 6 6.500-6" stroke="#3b3a39" strokeWidth="1.200" />
      </Svg>
      <Svg w={11} h={11} className="ml-[7px]">
        <path d="m.8.8 9.400 9.400M10.200.8.8 10.200" stroke="#252423" strokeWidth="1.200" />
      </Svg>
    </div>
  );
}

const WELL = "ml-[5px] w-[213px] border border-dashed border-[#bdbbb9] bg-white ";

function Visualizations() {
  return (
    <div className="flex w-[227px] flex-col border-x border-[#e1dfdd] text-[14px] text-[#252423]">
      <div className="flex h-[50px] items-center justify-between pl-[10px] pr-[10px]">
        <span className="text-[18.700px] font-semibold tracking-[-0.200px]">Visualizations</span>
        <Chevrons />
      </div>
      <div className="h-[22px] pl-[10px] text-[14px] font-semibold leading-[16px] tracking-[-0.150px]">Build visual</div>
      <div className="flex h-[40px] pl-[10px]">
        <div className="flex h-[40px] w-[40px] items-center justify-center rounded-[3px] bg-[#d2d0ce]">
          <Svg w={30} h={32}>
            <path d="M0 1.800h24" stroke="#252423" strokeWidth="1.600" />
            <path d="M.8 7.800h28.400v8.400H.8zM.8 21.800h28.400v8.400H.8z" fill="#117865" stroke="#252423" strokeWidth="1.500" strokeDasharray="2.500 1.500" />
          </Svg>
        </div>
        <Svg w={30} h={32} className="ml-[50px] mt-[4px]">
          <path d="M1.500 26V14.500h6.500M8.500 24V3h8v14M17 9h8" stroke="#252423" strokeWidth="1.500" />
          <path d="M27.500 12.500c-6 2-11 8-13 12l3 2.500c5-3 9-9 10-14.500zM14 24c-3-.5-4.500 1-5 3s-2 2-4 2c5 3 11 2.500 12.500-2.500" fill="#f3f2f1" stroke="#252423" strokeWidth="1.400" />
        </Svg>
        <Svg w={32} h={32} className="ml-[49px] mt-[4px]">
          <circle cx="13.500" cy="14" r="12" stroke="#252423" strokeWidth="1.500" />
          <path d="m2 15 7-4 5 4 11-8M8 24.500v-7M12.500 26v-8M17 25.500V17M21.500 23v-8.500" stroke="#252423" strokeWidth="1.500" />
          <path d="m22 22 8 8.500" stroke="#252423" strokeWidth="3.200" />
        </Svg>
      </div>
      <Svg w={225} h={17}>
        <path d="M0 15.500h20.500L30 6l9.500 9.500H225" stroke="#8a8886" strokeWidth="1.200" />
      </Svg>
      <div className="mt-[9px] grid w-[220px] grid-cols-6 gap-y-[5px] pl-[10px]">
        {VIZ.map((v, i) => (
          <div key={i} className={"flex h-[30px] w-[30px] items-center justify-center " + (i === 2 ? "border border-[#252423] bg-white" : "")}>
            <Svg w={23} h={23} className="overflow-visible">{v}</Svg>
          </div>
        ))}
      </div>
      <div className="flex h-[43px] items-start gap-[5.500px] pl-[16px] pt-[17px]">
        <i className="h-[2px] w-[2px] bg-[#252423]" />
        <i className="h-[2px] w-[2px] bg-[#252423]" />
        <i className="h-[2px] w-[2px] bg-[#252423]" />
      </div>
      <div className="relative flex-1 border-t border-[#e1dfdd] leading-[20px]">
        <div className="absolute right-0 top-[2px] h-[235px] w-[7px] rounded-[3px] bg-[#8a8886]" />
        <div className="mt-[11px] pl-[15px]">Y-axis</div>
        <div className={WELL + "mt-[6px] h-[45px] px-[3px] pt-[4px]"}><FieldChip label="hour" /></div>
        <div className="mt-[13px] pl-[15px]">X-axis</div>
        <div className={WELL + "mt-[7px] h-[44px] px-[3px] pt-[3px]"}><FieldChip label="Average Fare" /></div>
        <div className="mt-[14px] pl-[15px]">Legend</div>
        <div className={WELL + "mt-[6px] h-[35px] pl-[13px] leading-[33px] tracking-[0.100px]"}>Add data fields here</div>
        <div className="mt-[14px] pl-[15px] tracking-[0.100px]">Small multiples</div>
        <div className={WELL + "mt-[6px] h-[35px] pl-[13px] leading-[33px] tracking-[0.100px]"}>Add data fields here</div>
        <div className="mt-[14px] pl-[15px]">Tooltips</div>
        <div className="ml-[5px] mt-[6px] h-[2px] w-[213px] border-t border-dashed border-[#bdbbb9] bg-white" />
      </div>
    </div>
  );
}

/* ---------- data pane ---------- */

const FIELD_ICONS = {
  calc: (
    <>
      <rect x="1" y="1" width="14" height="16" rx="2.500" stroke="#252423" strokeWidth="1.300" />
      <rect x="4" y="3.800" width="8" height="3.200" rx=".8" stroke="#252423" strokeWidth="1.200" />
      <path d="M3.800 9.500h2v2h-2zM7 9.500h2v2H7zM10.200 9.500h2v2h-2zM3.800 12.800h2v2h-2zM7 12.800h2v2H7zM10.200 12.800h2v2h-2z" fill="#252423" />
    </>
  ),
  sum: <path d="M14 2H2.500L8 9l-5.500 7H14" stroke="#3b3a39" strokeWidth="1.300" />,
  tableSum: (
    <>
      <path d="M8 15.500H3.500C2 15.500 1 14.500 1 13V4c0-1.500 1-2.500 2.500-2.500h9C14 1.500 15 2.500 15 4v2M1.500 2v13M5 1.500v14M5 6h9M5 11h5M10 1.500V6" stroke="#252423" strokeWidth="1.200" />
      <path d="M17.500 9h-7l3 4-3 4.200h7.300" stroke="#252423" strokeWidth="1.300" />
    </>
  ),
  tableFx: (
    <>
      <path d="M6 15.500H3.500C2 15.500 1 14.500 1 13V4c0-1.500 1-2.500 2.500-2.500h9C14 1.500 15 2.500 15 4v7M5 1.500v14M5 5.500h4M10 1.500V5" stroke="#252423" strokeWidth="1.200" />
      <text x="6.500" y="16" fontFamily="Liberation Serif, serif" fontStyle="italic" fontWeight="bold" fontSize="14" fill="#252423" textLength="11.500">fx</text>
    </>
  ),
  date: (
    <>
      <rect x="1" y="2" width="14" height="14" rx="2.500" stroke="#252423" strokeWidth="1.300" />
      <path d="M1 5.800h14" stroke="#252423" strokeWidth="1.200" />
      <path d="M7.300 8.500h1.700v1.700H7.300zM10.500 8.500h1.700v1.700h-1.700zM4 11.700h1.700v1.700H4zM7.300 11.700h1.700v1.700H7.300zM4 8.500h1.700v1.700H4z" fill="#252423" />
    </>
  ),
};

const FIELDS = [
  ["Average Fare", "calc", true],
  ["day", "sum"],
  ["Distance (km)", "tableSum"],
  ["dropoff_latitude", "sum"],
  ["dropoff_longitude", "sum"],
  ["Fare Q1", "calc"],
  ["Fare Q3", "calc"],
  ["Fare Range", "calc"],
  ["fare_amount", "sum"],
  ["hour", "sum", true],
  ["Is Outlier", "tableFx"],
  ["key", "date", false, true],
  ["Mean Fare", "calc"],
  ["Median Fare", "calc"],
  ["Mode Fare", "calc"],
  ["month", "sum"],
  ["passenger_count", "sum"],
  ["peak", null],
  ["pickup_datetime", "date", false, true],
  ["pickup_latitude", "sum"],
  ["pickup_longitude", "sum"],
  ["Unnamed: 0", "sum"],
];

function DataPane() {
  return (
    <div className="relative flex-1 text-[14px] text-[#323130]">
      <div className="flex h-[50px] items-center justify-between pl-[10px] pr-[8px]">
        <span className="text-[18.700px] font-semibold tracking-[-0.100px] text-[#252423]">Data</span>
        <Chevrons />
      </div>
      <div className="ml-[5px] mt-[7px] flex h-[30px] w-[515px] items-center rounded-[5px] border border-[#c8c6c4] border-b-[#605e5c] bg-white pl-[15px]">
        <Svg w={18} h={18} className="mb-[1px]">
          <circle cx="7.500" cy="7.500" r="6.500" stroke="#605e5c" strokeWidth="1.200" />
          <path d="m12.200 12.200 5 5" stroke="#605e5c" strokeWidth="1.300" />
        </Svg>
        <span className="ml-[8px] mt-[3px] text-[16.300px] text-[#707070]">Search</span>
      </div>
      <div className="mt-[1px] flex h-[30px] items-center pl-[16px]">
        <Svg w={15} h={9} className="mb-[2px]">
          <path d="m.8 1 6.700 6.500L14.200 1" stroke="#3b3a39" strokeWidth="1.200" />
        </Svg>
        <Svg w={24} h={22} className="ml-[5px] mt-[12px] overflow-visible">
          <path d="M1-1v12.500h13M1 3h15M1 8h15M5.500-1v12.500M11-1v12.500M15.500-1v9" stroke="#252423" strokeWidth="1.300" />
          <circle cx="15.500" cy="12" r="7.300" fill="#117865" />
          <path d="m12.500 12 2.200 2.200 4-4" stroke="#fff" strokeWidth="1.700" />
        </Svg>
        <span className="ml-[-1px]">uber_cleaned</span>
      </div>
      {FIELDS.map(([name, icon, checked, expandable]) => (
        <div key={name} className="flex h-[30px] items-center pl-[38px]">
          <Svg w={9} h={15}>
            {expandable && <path d="m1 .8 6.500 6.700L1 14.200" stroke="#3b3a39" strokeWidth="1.200" />}
          </Svg>
          <div className={"ml-[8px] flex h-[15px] w-[15px] items-center justify-center rounded-[2px] border " + (checked ? "border-[#4f6f67] bg-[#117865]" : "border-[#797775]")}>
            {checked && (
              <Svg w={11} h={9}>
                <path d="m1 4.500 3 3L10 1" stroke="#fff" strokeWidth="1.300" />
              </Svg>
            )}
          </div>
          <Svg w={18} h={18} className="ml-[10px] overflow-visible">{icon && FIELD_ICONS[icon]}</Svg>
          <span className="ml-[4px] tracking-[0.030px]">{name}</span>
        </div>
      ))}
      <div className="absolute right-[3px] top-[106px] h-[645px] w-[10px] bg-[#8a8886]" />
    </div>
  );
}

/* ---------- status bar ---------- */

function StatusBar() {
  return (
    <div className="flex h-[29px] items-center border-t border-[#e1dfdd] bg-[#f3f2f1] pl-[5px] text-[14px] text-[#484644]">
      <span className="mt-[2px] tracking-[0.150px]">Page 1 of 1</span>
      <div className="ml-auto mt-[1px] flex items-center pr-[20px]">
        <div className="h-[2px] w-[6px] bg-[#605e5c]" />
        <div className="ml-[6px] flex w-[125px] items-center">
          <div className="h-px w-[60px] bg-[#605e5c]" />
          <div className="h-[13px] w-[5px] bg-[#605e5c]" />
          <div className="h-px flex-1 bg-[#605e5c]" />
        </div>
        <Svg w={11} h={11} className="ml-[6px]">
          <path d="M5.500.500v10M.500 5.500h10" stroke="#484644" strokeWidth="1.700" />
        </Svg>
        <span className="ml-[16px] w-[37px] whitespace-nowrap text-[14px] tracking-[-0.100px] text-[#605e5c]">100%</span>
        <Svg w={21} h={16} className="ml-[15px]">
          <path d="M1 1h19v14H1z" stroke="#797775" strokeWidth="1.800" />
          <path d="M7 4H4v2.500M14 4h3v2.500M7 12H4V9.500M14 12h3V9.500" stroke="#484644" strokeWidth="1.200" />
        </Svg>
      </div>
    </div>
  );
}

/* ---------- taskbar ---------- */

const ChromeLogo = ({ badge }) => (
  <g>
    <circle cx="15" cy="15" r="15" fill="#fbc116" />
    <path d="M2 7.500A15 15 0 0 1 28 7.500H15L8.500 19z" fill="#e33b2e" />
    <path d="M2 7.500 8.500 18.500 15 22l5.500-1L15 30A15 15 0 0 1 2 7.500z" fill="#1ea446" />
    <circle cx="15" cy="15" r="7.300" fill="#fff" />
    <circle cx="15" cy="15" r="5.800" fill="#2f7cf0" />
    {badge}
  </g>
);

const TASKS = [
  [
    <>
      <defs>
        <linearGradient id="winG" x1="0" y1="0" x2="1" y2="1">
          <stop offset="0" stopColor="#7eeaff" />
          <stop offset="1" stopColor="#1e9df0" />
        </linearGradient>
      </defs>
      <path transform="translate(-2 0)" d="M.800.500H14.500v14H.800zM15.500.500h14v14h-14zM.800 15.500h13.700v14H.800zM15.500 15.500h14v14h-14z" fill="url(#winG)" />
    </>,
  ],
  [<><rect x="8" y="1" width="22" height="20" rx="1.500" fill="#eee" /><rect x="0" y="8.500" width="22" height="20" rx="1.500" fill="#8a8a8a" fillOpacity=".8" /></>],
  [
    <>
      <defs>
        <linearGradient id="edgeG" x1="0" y1=".3" x2="1" y2=".3">
          <stop offset="0" stopColor="#1f9fe0" />
          <stop offset=".6" stopColor="#35c4c6" />
          <stop offset="1" stopColor="#6be05a" />
        </linearGradient>
      </defs>
      <circle cx="15" cy="15" r="15" fill="#1462b8" />
      <path d="M.5 12C2 4 8 0 15 0c9 0 15 6 15 12 0 5-4 7.500-8 7.500-3 0-5-1-4-2.500 2-3 .5-7.500-5-7.500C7 9 2 11 .5 16z" fill="url(#edgeG)" />
      <path d="M13 9.500C7 9 1 12 .2 16c.5 8 6.800 14 14.800 14C9 27 6 20 9 14.500c1-2.500 3-4 4-5z" fill="#1b82d8" />
      <path d="M17.500 17c-1 2 2 4 6 3.500 2 0 4-1 5.500-2-1 3.500-4 6-8 6-5 0-8.500-4-8-9 .3-3 2-4.500 2.500-4.500 2 1 3 4 2 6z" fill="#1c1c1c" />
    </>,
    true,
  ],
  [<><rect x="0" y="0" width="30" height="30" rx="4" fill="#202020" /><path d="M12 4.500h3v7h-3a3.500 3.500 0 0 1 0-7z" fill="#f24e1e" /><path d="M15 4.500h3a3.500 3.500 0 0 1 0 7h-3z" fill="#ff7262" /><path d="M12 11.500h3v7h-3a3.500 3.500 0 0 1 0-7z" fill="#a259ff" /><circle cx="18.500" cy="15" r="3.500" fill="#1abcfe" /><path d="M12 18.500h3V22a3.500 3.500 0 1 1-3-3.500z" fill="#0acf83" /></>],
  [<><path d="M22 0 7 13.500 2.500 10 0 11.500 22 30l2-1V1z" fill="#1f8ad2" /><path d="M0 18.500 22 0v8.500L2.500 20z" fill="#1070b3" /><path d="m22 0 8 3.500v23L22 30z" fill="#2ba4ee" /></>, true],
  [<ChromeLogo badge={<><circle cx="26" cy="4" r="9.700" fill="#d9c3a3" /><path d="M20 11.500c0-4 1-5 3.500-6-2-4-1-8 2.500-8s4.500 4 2.500 8c2.500 1 3.500 2 3.500 6-3 3-9 3-12 0z" fill="#2a211b" /></>} />, true],
  [<><path d="M0 4c0-1.500 1-2 2-2h8l3 4h15c1.500 0 2 1 2 2v4H0z" fill="#d99a0b" /><path d="M0 7h28c1.500 0 2 1 2 2v17c0 1.500-1 2-2 2H2c-1.500 0-2-1-2-2z" fill="#ffd257" /><path d="M5 28v-4c0-2 1-3 3-3h14c2 0 3 1 3 3v4z" fill="#0f7fd4" /><path d="M9 24.500h12" stroke="#0a4f8c" strokeWidth="1.500" /></>, true],
  [<><path d="M5 19h20l3 9H2z" fill="#f07f0e" /><path d="m15 0 8 22c-3 3-13 3-16 0z" fill="#f07f0e" /><path d="m13 5.500-2 5.500h8l-2-5.500zM9.300 15.500 7.700 20c4 2.500 10.600 2.500 14.600 0l-1.600-4.500z" fill="#ececec" /></>, true],
  [
    <>
      <circle cx="15" cy="15" r="14" fill="#f5a52a" />
      <path d="M3 8C8-1 24-1 28 9c1 3 1 6 0 9C26 8 14 5 3 8z" fill="#8a5cf0" />
      <path d="M3 7C-1 16 4 28 15 29 8 24 5 14 9 6z" fill="#f0652f" />
      <path d="M15 29c9 0 14-6 14-13-3 6-9 8-14 13z" fill="#fbd04a" />
      <path d="M15 6.500c3 2 5 2 7.500 2.500 1 7-2 11.500-7.500 15-5.500-3.500-8.500-8-7.500-15 2.500-.500 4.500-.500 7.500-2.500z" fill="#fff" />
      <circle cx="15" cy="13" r="2" fill="#3a2a68" /><path d="M14.200 13h1.600l.500 6h-2.600z" fill="#3a2a68" />
    </>,
    false,
    true,
  ],
  [<ChromeLogo badge={<><circle cx="25.500" cy="4" r="9.700" fill="#07231b" /><path d="M22.500-3v11h2M27.500 1.500c-3 0-3 2.500-.5 2.500s2 3.500-1 3.500" stroke="#d9e3df" strokeWidth="1.200" /></>} />, true],
  [<><rect x="0" y="4" width="30" height="22" rx="1.500" fill="#454545" /><path d="M0 4h30v4H0z" fill="#9a9a9a" /><path d="M10 4v4M20 4v4" stroke="#555" /><path d="m4 11 6 5.500L4 22M13 22.500h9" stroke="#e8e8e8" strokeWidth="2.500" /></>, true],
  [<><rect x="16" y="0" width="10.500" height="30" rx="1" fill="#dc9b0e" /><path d="M9 9c0-1 .5-1.500 1.500-1.500H18c1 0 1.500.5 1.500 1.500v21H9z" fill="#f0bd2a" /><path d="M2 17c0-1 .5-1.500 1.500-1.500H11c1 0 1.500.5 1.500 1.500v13H2z" fill="#f9df6c" /></>, true],
  [<g transform="translate(0 17)"><rect x="0" y="0" width="22" height="23" rx="3" fill="#e8e8ea" /><path d="M4.500 15V5h11" stroke="#d83b1e" strokeWidth="3" strokeDasharray="2.800 1.300" /><path d="M18 7v9H7" stroke="#8a8d91" strokeWidth="3" /><circle cx="26" cy="16.500" r="3" stroke="#2f9fe0" strokeWidth="2" /><path d="M23 18.500 12 21M17 16v10" stroke="#2f9fe0" strokeWidth="2.500" /></g>],
];

function Taskbar() {
  return (
    <div className="flex h-[59px] items-start overflow-hidden border-t border-black bg-[#1c1c1c]">
      <div className="flex h-[58px] flex-1 border-t border-[#3a3a3a] pl-[603px]">
        {TASKS.map(([icon, running, active], i) => (
          <div key={i} className="flex w-[55px] shrink-0 justify-center pt-[4px]">
            <div className={"flex h-[50px] w-[50px] flex-col items-center rounded-[5px] pt-[10px] " + (active ? "bg-[#83434a]" : "")}>
              <Svg w={30} h={30} className="overflow-visible">{icon}</Svg>
              {running && <div className="mt-[5px] h-[4px] w-[8px] rounded-full bg-[#9a9a9a]" />}
              {active && <div className="mt-[5px] h-[4px] w-[40px] shrink-0 rounded-full bg-[#ff99a4]" />}
            </div>
          </div>
        ))}
        <div className="ml-auto flex items-center pr-[22px] text-white">
          <Svg w={15} h={10}>
            <path d="m1.500 8.500 6-6 6 6" stroke="#fff" strokeWidth="1.700" />
          </Svg>
          <Svg w={20} h={17} className="ml-[22px]">
            <path d="M.8 6.500c5-5.500 13.400-5.500 18.400 0M3.800 9.700c3.500-3.700 8.900-3.700 12.400 0M6.500 12.700c2-2 5-2 7 0" stroke="#fff" strokeWidth="1.600" />
            <circle cx="10" cy="15" r="1.800" fill="#fff" />
          </Svg>
          <Svg w={21} h={18} className="ml-[9px]">
            <path d="M1 6.500h3L9 2v14l-5-4.500H1z" stroke="#fff" strokeWidth="1.400" strokeLinejoin="round" />
            <path d="M11.500 6c1.500 1.500 1.500 4.500 0 6" stroke="#fff" strokeWidth="1.400" />
            <path d="M14.500 4c3 3 3 7 0 10M17.500 1.500c4 4.500 4 10.500 0 15" stroke="#5c5c5c" strokeWidth="1.400" />
          </Svg>
          <Svg w={21} h={18} className="ml-[9px]">
            <rect x="2" y="5" width="16" height="11.500" rx="2.500" stroke="#fff" strokeWidth="1.400" />
            <path d="M4 14.500 6.500 7H16v7.500zM18.500 8.500h2v4h-2z" fill="#fff" />
            <path d="M4-.5 0 6h3L1.500 11 7 4H4.500L6-.5z" fill="#fff" stroke="#1c1c1c" strokeWidth=".8" />
          </Svg>
          <div className="ml-[18px] w-[72px] whitespace-nowrap text-right text-[14.200px] leading-[20px] tracking-[0.150px]">
            <div>10:29 AM</div>
            <div>7/27/2025</div>
          </div>
        </div>
      </div>
    </div>
  );
}

export default function App() {
  return (
    <div className="flex h-[1078px] w-[1918px] flex-col overflow-hidden bg-[#f3f2f1] font-['Open_Sans','Noto_Sans',sans-serif]">
      <TitleBar />
      <div className="z-10 h-[157px] bg-[#fafafa] shadow-[0_2px_5px_rgba(0,0,0,0.18)]">
        <Tabs />
        <Ribbon />
      </div>
      <div className="flex h-[790px]">
        <Rail />
        <Canvas />
        <FiltersPane />
        <Visualizations />
        <DataPane />
      </div>
      <StatusBar />
      <Taskbar />
    </div>
  );
}
